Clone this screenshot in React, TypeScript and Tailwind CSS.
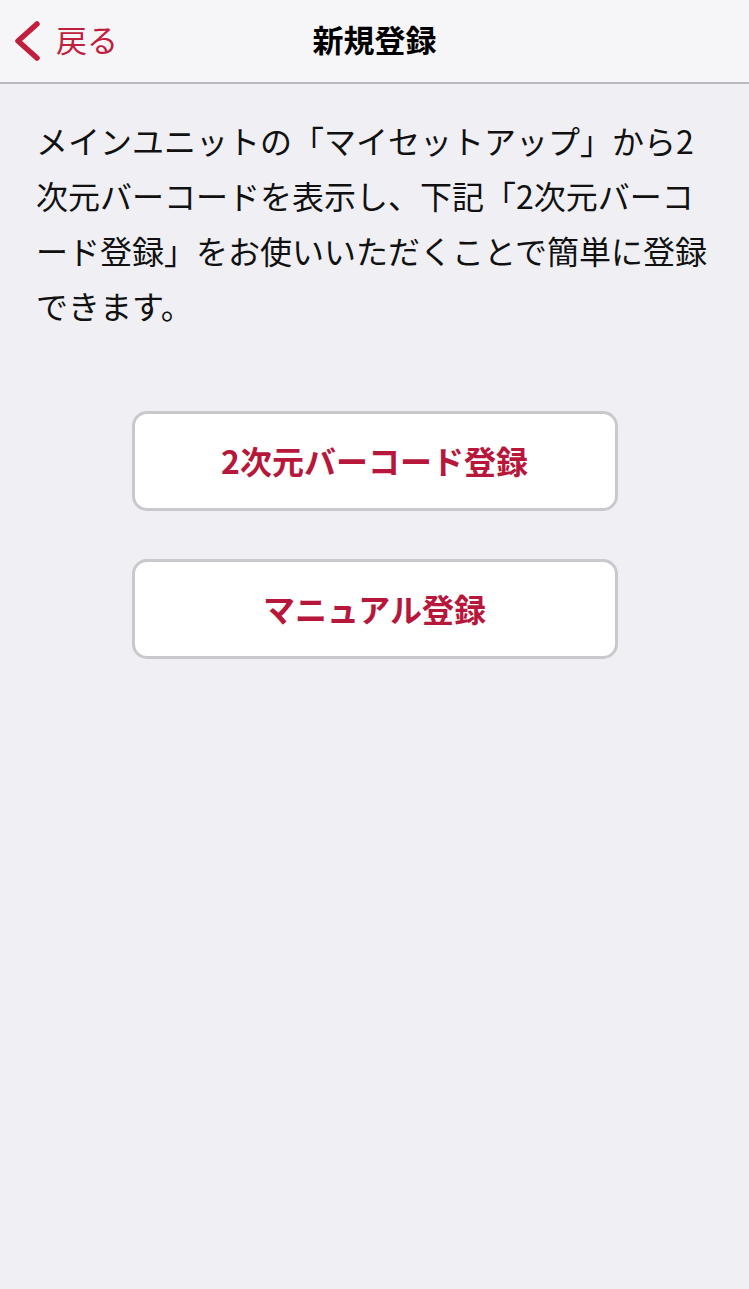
export default function App() {
  const jp = "font-['Noto_Sans_CJK_JP','Noto_Sans',sans-serif]";
  return (
    <div className={`min-h-[1289px] w-full bg-[#efeff4] ${jp}`}>
      <header className="relative h-[84px] bg-[#f6f6f8] border-b-2 border-[#b9b9bd] flex items-center justify-center">
        <button className="absolute left-0 top-0 h-[82px] flex items-center pl-[12px] gap-[14px] text-[#c0203e]">
          <svg width="30" height="40" viewBox="0 0 30 40" fill="none">
            <path d="M25 3 L6 20 L25 37" stroke="#c0203e" strokeWidth="5.5" strokeLinecap="round" strokeLinejoin="round" />
          </svg>
          <span className="text-[31px] leading-none -mt-[6px]">戻る</span>
        </button>
        <h1 className="text-[31px] font-bold text-black leading-none -mt-[6px]">新規登録</h1>
      </header>

      <main className="px-[36px] pt-[29px]">
        <p className="text-[32px] leading-[55px] text-[#111]">
          メインユニットの「マイセットアップ」から2次元バーコードを表示し、下記「2次元バーコード登録」をお使いいただくことで簡単に登録できます。
        </p>

        <div className="flex flex-col items-center gap-[48px] mt-[78px]">
          <button className="w-[486px] h-[100px] bg-white border-[3px] border-[#c8c8cd] rounded-[15px] text-[32px] font-bold text-[#b8173c] leading-none pb-[2px]">
            2次元バーコード登録
          </button>
          <button className="w-[486px] h-[100px] bg-white border-[3px] border-[#c8c8cd] rounded-[15px] text-[32px] font-bold text-[#b8173c] leading-none pb-[2px]">
            マニュアル登録
          </button>
        </div>
      </main>
    </div>
  );
}
